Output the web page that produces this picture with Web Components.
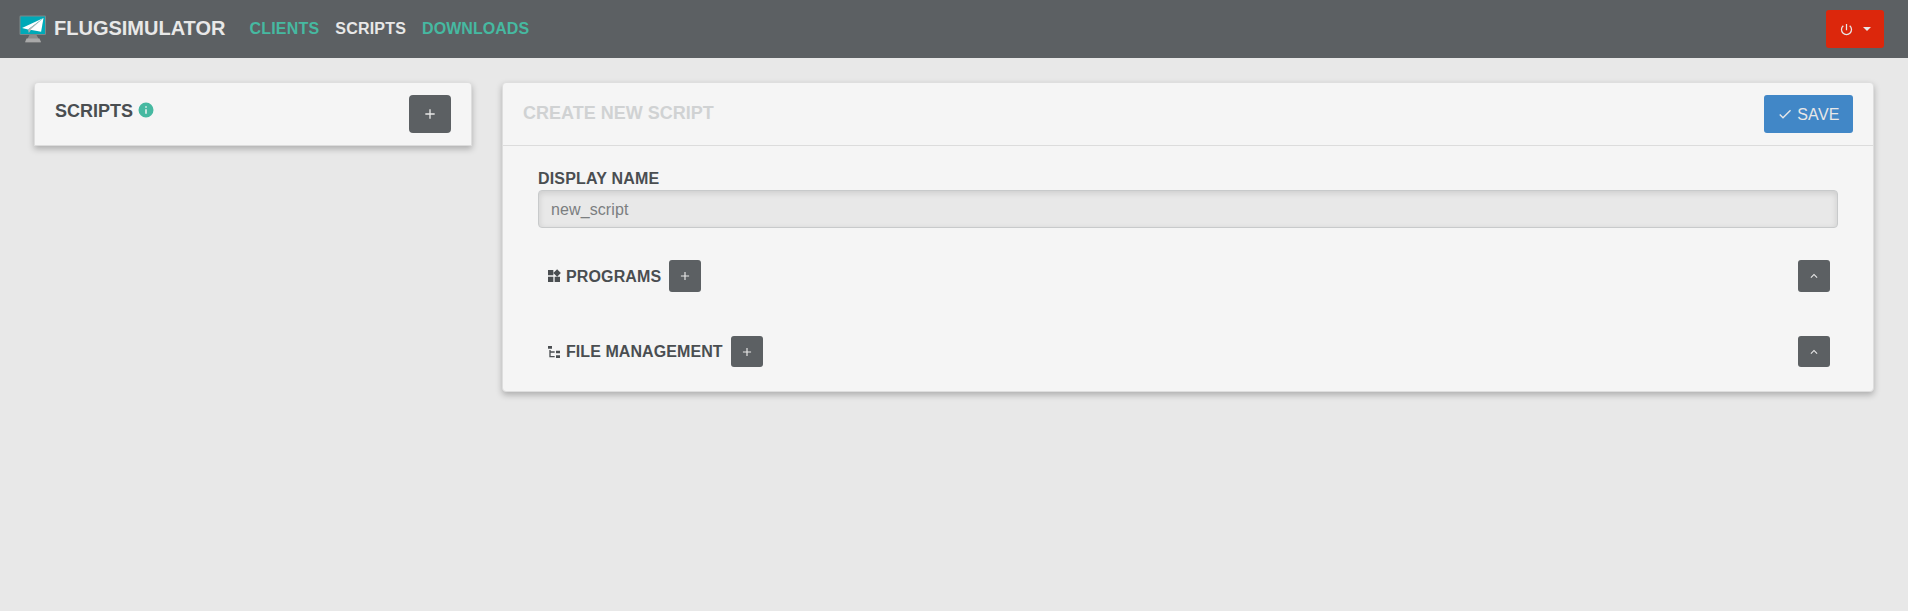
<!DOCTYPE html>
<html lang="en">
<head>
<meta charset="utf-8">
<title>Flugsimulator</title>
<style>
html,body{margin:0;background:#e8e8e8}
body{font:16px/24px "Liberation Sans",Arial,sans-serif;color:#4a4e51;min-height:611px}
</style>
</head>
<body>
<app-shell></app-shell>
<script>
const define = (name, html) => {
  const t = document.createElement('template');
  t.innerHTML = '<style>*{box-sizing:border-box}</style>' + html;
  customElements.define(name, class extends HTMLElement {
    constructor() {
      super();
      this.attachShadow({mode: 'open'}).append(t.content.cloneNode(true));
    }
  });
};
const icons = {
  plus: '<path d="M19 13h-6v6h-2v-6H5v-2h6V5h2v6h6z"/>',
  check: '<path d="M9 16.2 4.8 12l-1.4 1.4L9 19 21 7l-1.4-1.4z"/>',
  up: '<path d="M7.4 15.4 12 10.8l4.6 4.6L18 14l-6-6-6 6z"/>',
  info: '<path d="M12 2a10 10 0 1 0 0 20 10 10 0 0 0 0-20zm1 15h-2v-6h2zm0-8h-2V7h2z"/>',
  power: '<path d="M13 3h-2v10h2zm4.8 2.2-1.4 1.4A7 7 0 1 1 7.6 6.600L6.200 5.200a9 9 0 1 0 11.600 0z"/>',
  widgets: '<path d="M13 13v8h8v-8zM3 21h8v-8H3zM3 3v8h8V3zm13.660-1.310L11 7.340 16.660 13l5.660-5.660z"/>',
  tree: '<path d="M3 3h6v4H3zm12 7h6v4h-6zm0 7h6v4h-6zm-2-4H7v5h6v2H5V9h2v2h6z"/>'
};
customElements.define('app-icon', class extends HTMLElement {
  constructor() { super(); this.attachShadow({mode: 'open'}); }
  connectedCallback() {
    this.shadowRoot.innerHTML = `<style>:host{display:block;width:16px;height:16px;flex:none}svg{display:block;width:100%;height:100%;fill:currentColor}</style><svg viewBox="0 0 24 24">${icons[this.getAttribute('name')]}</svg>`;
  }
});
define('app-logo', `<style>:host{display:block;width:28px;height:30px}svg{display:block}</style>
<svg width="28" height="30" viewBox="0 0 28 30">
<path d="M10.500 20h7l4 7.200h-15z" fill="#8c8c8c"/><path d="M7.500 23.500h13l1.600 3.700H6z" fill="#a9a9a9"/>
<rect x=".5" y=".5" width="26.500" height="19.500" rx="1.200" fill="#7e8789"/>
<rect x="1.500" y="1.500" width="24.500" height="17.500" fill="#00a9b7"/>
<path d="M24.500 3 3 13l6 1.400z" fill="#fff"/><path d="M24.500 3 9 14.400l.8 3.600 2-2.700z" fill="#b5b5b5"/><path d="M24.500 3 11.300 14.700l10.800 2z" fill="#fff"/>
</svg>`);
define('app-button', `<style>
:host{display:block;flex:none}
button{display:flex;align-items:center;justify-content:center;width:100%;height:38px;margin:0;padding:0;border:0;border-radius:4px;background:#5c6063;color:#e8e8e8;font:inherit;letter-spacing:inherit}
:host([kind=save]) button{background:#4187c7;border-radius:3px}
:host([kind=power]) button{background:#dc270c;border-radius:3px}
:host([small]){width:32px}
:host([small]) button{height:var(--h,32px);border-radius:3px}
</style><button><slot></slot></button>`);
define('nav-link', `<style>:host{display:block;font-weight:700;color:#46b9a1}:host([active]){color:#e8e8e8}a{color:inherit}</style><a><slot></slot></a>`);
define('nav-bar', `<style>
:host{display:flex;height:58px;background:#5c6063;padding:0 24px 0 19px;align-items:center}
app-logo{margin:1px 7px 0 0}
.brand{font:700 20px/30px "Liberation Sans",Arial,sans-serif;color:#e8e8e8;margin:-2px 24px 0 0}
nav{display:flex;gap:16px}
nav-link{letter-spacing:.2px}
nav-link:last-child{letter-spacing:.04px}
app-button{width:58px;margin-left:auto}
.caret{border:4px solid transparent;border-top-color:currentColor;border-bottom:0;margin-left:9px}
app-icon{width:15px;height:15px}
</style>
<app-logo></app-logo><span class="brand">FLUGSIMULATOR</span>
<nav><nav-link>CLIENTS</nav-link><nav-link active>SCRIPTS</nav-link><nav-link>DOWNLOADS</nav-link></nav>
<app-button kind="power"><app-icon name="power"></app-icon><span class="caret"></span></app-button>`);
define('app-card', `<style>
:host{display:block;box-sizing:border-box;background:#f5f5f5;border:1px solid #dedede;border-radius:4px;box-shadow:0 3px 6px rgba(0,0,0,.25)}
header{display:flex;justify-content:space-between;height:63px;padding:12px 20px;border-bottom:1px solid #dcdcdc}
:host([plain]){border-bottom:0;border-radius:4px 4px 0 0}
</style><header><slot name="title"></slot><slot name="action"></slot></header><slot></slot>`);
define('text-field', `<style>
:host{display:block}
label{display:block;font-weight:700;line-height:24px;padding-top:1px;height:24px;letter-spacing:.18px}
input{display:block;width:100%;height:38px;padding:2px 12px 0;border:1px solid #c8cacb;border-radius:4px;background:#e8e8e8;color:#4a4e51;font:inherit;letter-spacing:.1px;box-shadow:inset 0 2px 6px rgba(0,0,0,.12)}
input::placeholder{color:#7b7e80;opacity:1}
</style><label>DISPLAY NAME</label><input placeholder="new_script">`);
define('script-section', `<style>
:host{display:flex;align-items:center;height:32px;padding:0 8px;font-weight:700}
.t{display:flex;align-items:center}
.l{padding-top:var(--drop,2px)}
::slotted(app-icon){margin-right:4px}
.add{margin-left:8px}.fold{margin-left:auto}
.add app-icon,.fold app-icon{width:14px;height:14px}
</style><div class="t"><slot name="icon"></slot><span class="l"><slot></slot></span></div>
<app-button class="add" small><app-icon name="plus"></app-icon></app-button>
<app-button class="fold" small><app-icon name="up"></app-icon></app-button>`);
define('app-shell', `<style>
:host{display:block}
main{display:grid;grid-template-columns:438px 1372px;gap:30px;padding:24px 34px;align-items:start}
.h{display:flex;font-weight:700;font-size:18px;line-height:27px;height:38px;padding-top:3px}
.h app-icon{margin:3px 0 0 4px;width:18px;height:18px;color:#46b9a1}
.new{color:#d0d2d3;padding-top:5px}
.add{width:42px}.save{width:89px;letter-spacing:.3px}
.save span{padding-top:2px}
.save app-icon{margin-right:4px}
.body{padding:20px 35px 24px}
text-field{margin-bottom:32px}
script-section{letter-spacing:.13px}
script-section+script-section{margin-top:44px;--h:31px;--drop:0px;height:31px;letter-spacing:.07px}
.w{width:16px;height:16px}
</style>
<nav-bar></nav-bar>
<main>
<app-card plain><div class="h" slot="title">SCRIPTS<app-icon name="info"></app-icon></div><app-button class="add" slot="action"><app-icon name="plus"></app-icon></app-button></app-card>
<app-card><div class="h new" slot="title">CREATE NEW SCRIPT</div><app-button class="save" kind="save" slot="action"><app-icon name="check"></app-icon><span>SAVE</span></app-button>
<div class="body"><text-field></text-field>
<script-section><app-icon class="w" slot="icon" name="widgets"></app-icon>PROGRAMS</script-section>
<script-section><app-icon class="w" slot="icon" name="tree"></app-icon>FILE MANAGEMENT</script-section></div></app-card>
</main>`);
</script>
</body>
</html>
